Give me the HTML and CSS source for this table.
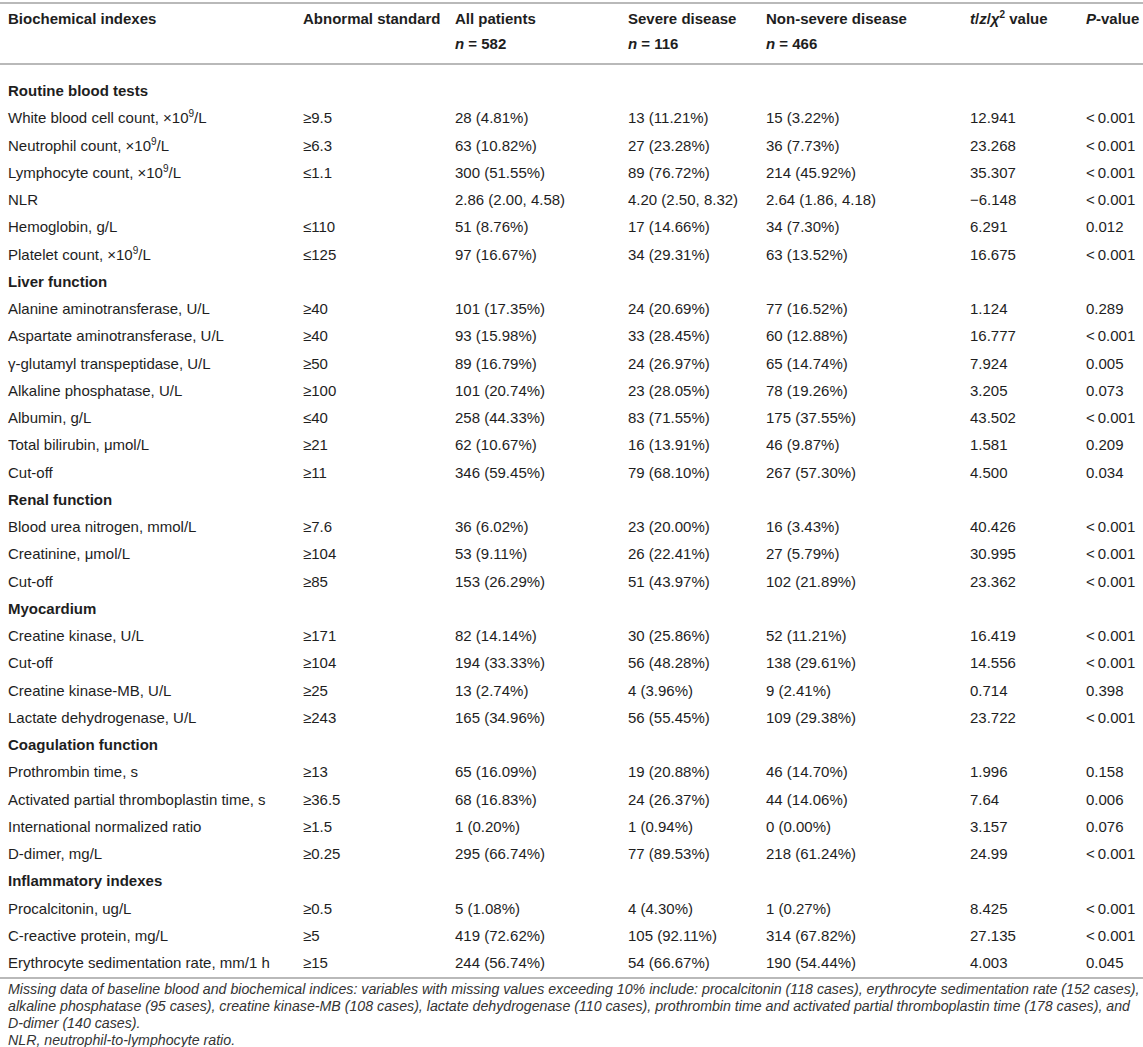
FILE: index.html
```html
<!DOCTYPE html>
<html>
<head>
<meta charset="utf-8">
<link rel="stylesheet" href="styles.css">
</head>
<body>
<div class="wrap">
<table class="tbl">
<colgroup>
<col class="c1"><col class="c2"><col class="c3"><col class="c4"><col class="c5"><col class="c6"><col class="c7">
</colgroup>
<thead>
<tr class="hrow">
<th>Biochemical indexes</th>
<th>Abnormal standard</th>
<th>All patients</th>
<th>Severe disease</th>
<th>Non-severe disease</th>
<th><i>t</i>/<i>z</i>/<i>χ</i><sup>2</sup> value</th>
<th><i>P</i>-value</th>
</tr>
<tr class="nrow">
<th></th>
<th></th>
<th><i>n</i> = 582</th>
<th><i>n</i> = 116</th>
<th><i>n</i> = 466</th>
<th></th>
<th></th>
</tr>
</thead>
<tbody>
<tr class="sec first"><td colspan="7">Routine blood tests</td></tr>
<tr><td>White blood cell count, ×10<sup>9</sup>/L</td><td>≥9.5</td><td>28 (4.81%)</td><td>13 (11.21%)</td><td>15 (3.22%)</td><td>12.941</td><td>&lt;&#8201;0.001</td></tr>
<tr><td>Neutrophil count, ×10<sup>9</sup>/L</td><td>≥6.3</td><td>63 (10.82%)</td><td>27 (23.28%)</td><td>36 (7.73%)</td><td>23.268</td><td>&lt;&#8201;0.001</td></tr>
<tr><td>Lymphocyte count, ×10<sup>9</sup>/L</td><td>≤1.1</td><td>300 (51.55%)</td><td>89 (76.72%)</td><td>214 (45.92%)</td><td>35.307</td><td>&lt;&#8201;0.001</td></tr>
<tr><td>NLR</td><td></td><td>2.86 (2.00, 4.58)</td><td>4.20 (2.50, 8.32)</td><td>2.64 (1.86, 4.18)</td><td>−6.148</td><td>&lt;&#8201;0.001</td></tr>
<tr><td>Hemoglobin, g/L</td><td>≤110</td><td>51 (8.76%)</td><td>17 (14.66%)</td><td>34 (7.30%)</td><td>6.291</td><td>0.012</td></tr>
<tr><td>Platelet count, ×10<sup>9</sup>/L</td><td>≤125</td><td>97 (16.67%)</td><td>34 (29.31%)</td><td>63 (13.52%)</td><td>16.675</td><td>&lt;&#8201;0.001</td></tr>
<tr class="sec"><td colspan="7">Liver function</td></tr>
<tr><td>Alanine aminotransferase, U/L</td><td>≥40</td><td>101 (17.35%)</td><td>24 (20.69%)</td><td>77 (16.52%)</td><td>1.124</td><td>0.289</td></tr>
<tr><td>Aspartate aminotransferase, U/L</td><td>≥40</td><td>93 (15.98%)</td><td>33 (28.45%)</td><td>60 (12.88%)</td><td>16.777</td><td>&lt;&#8201;0.001</td></tr>
<tr><td>γ-glutamyl transpeptidase, U/L</td><td>≥50</td><td>89 (16.79%)</td><td>24 (26.97%)</td><td>65 (14.74%)</td><td>7.924</td><td>0.005</td></tr>
<tr><td>Alkaline phosphatase, U/L</td><td>≥100</td><td>101 (20.74%)</td><td>23 (28.05%)</td><td>78 (19.26%)</td><td>3.205</td><td>0.073</td></tr>
<tr><td>Albumin, g/L</td><td>≤40</td><td>258 (44.33%)</td><td>83 (71.55%)</td><td>175 (37.55%)</td><td>43.502</td><td>&lt;&#8201;0.001</td></tr>
<tr><td>Total bilirubin, μmol/L</td><td>≥21</td><td>62 (10.67%)</td><td>16 (13.91%)</td><td>46 (9.87%)</td><td>1.581</td><td>0.209</td></tr>
<tr><td>Cut-off</td><td>≥11</td><td>346 (59.45%)</td><td>79 (68.10%)</td><td>267 (57.30%)</td><td>4.500</td><td>0.034</td></tr>
<tr class="sec"><td colspan="7">Renal function</td></tr>
<tr><td>Blood urea nitrogen, mmol/L</td><td>≥7.6</td><td>36 (6.02%)</td><td>23 (20.00%)</td><td>16 (3.43%)</td><td>40.426</td><td>&lt;&#8201;0.001</td></tr>
<tr><td>Creatinine, μmol/L</td><td>≥104</td><td>53 (9.11%)</td><td>26 (22.41%)</td><td>27 (5.79%)</td><td>30.995</td><td>&lt;&#8201;0.001</td></tr>
<tr><td>Cut-off</td><td>≥85</td><td>153 (26.29%)</td><td>51 (43.97%)</td><td>102 (21.89%)</td><td>23.362</td><td>&lt;&#8201;0.001</td></tr>
<tr class="sec"><td colspan="7">Myocardium</td></tr>
<tr><td>Creatine kinase, U/L</td><td>≥171</td><td>82 (14.14%)</td><td>30 (25.86%)</td><td>52 (11.21%)</td><td>16.419</td><td>&lt;&#8201;0.001</td></tr>
<tr><td>Cut-off</td><td>≥104</td><td>194 (33.33%)</td><td>56 (48.28%)</td><td>138 (29.61%)</td><td>14.556</td><td>&lt;&#8201;0.001</td></tr>
<tr><td>Creatine kinase-MB, U/L</td><td>≥25</td><td>13 (2.74%)</td><td>4 (3.96%)</td><td>9 (2.41%)</td><td>0.714</td><td>0.398</td></tr>
<tr><td>Lactate dehydrogenase, U/L</td><td>≥243</td><td>165 (34.96%)</td><td>56 (55.45%)</td><td>109 (29.38%)</td><td>23.722</td><td>&lt;&#8201;0.001</td></tr>
<tr class="sec"><td colspan="7">Coagulation function</td></tr>
<tr><td>Prothrombin time, s</td><td>≥13</td><td>65 (16.09%)</td><td>19 (20.88%)</td><td>46 (14.70%)</td><td>1.996</td><td>0.158</td></tr>
<tr><td>Activated partial thromboplastin time, s</td><td>≥36.5</td><td>68 (16.83%)</td><td>24 (26.37%)</td><td>44 (14.06%)</td><td>7.64</td><td>0.006</td></tr>
<tr><td>International normalized ratio</td><td>≥1.5</td><td>1 (0.20%)</td><td>1 (0.94%)</td><td>0 (0.00%)</td><td>3.157</td><td>0.076</td></tr>
<tr><td>D-dimer, mg/L</td><td>≥0.25</td><td>295 (66.74%)</td><td>77 (89.53%)</td><td>218 (61.24%)</td><td>24.99</td><td>&lt;&#8201;0.001</td></tr>
<tr class="sec"><td colspan="7">Inflammatory indexes</td></tr>
<tr><td>Procalcitonin, ug/L</td><td>≥0.5</td><td>5 (1.08%)</td><td>4 (4.30%)</td><td>1 (0.27%)</td><td>8.425</td><td>&lt;&#8201;0.001</td></tr>
<tr><td>C-reactive protein, mg/L</td><td>≥5</td><td>419 (72.62%)</td><td>105 (92.11%)</td><td>314 (67.82%)</td><td>27.135</td><td>&lt;&#8201;0.001</td></tr>
<tr class="last"><td>Erythrocyte sedimentation rate, mm/1 h</td><td>≥15</td><td>244 (56.74%)</td><td>54 (66.67%)</td><td>190 (54.44%)</td><td>4.003</td><td>0.045</td></tr>
</tbody>
</table>
<div class="notes">
<p>Missing data of baseline blood and biochemical indices: variables with missing values exceeding 10% include: procalcitonin (118 cases), erythrocyte sedimentation rate (152 cases),<br>alkaline phosphatase (95 cases), creatine kinase-MB (108 cases), lactate dehydrogenase (110 cases), prothrombin time and activated partial thromboplastin time (178 cases), and<br>D-dimer (140 cases).</p>
<p>NLR, neutrophil-to-lymphocyte ratio.</p>
</div>
</div>
</body>
</html>
```

FILE: styles.css
```css
html, body {
  margin: 0;
  padding: 0;
  background: #ffffff;
}
body {
  font-family: "Liberation Sans", Arial, sans-serif;
  font-size: 15px;
  color: #1e1e1e;
}
.wrap {
  padding-top: 2px;
}
.tbl {
  width: 1143px;
  border-collapse: collapse;
  table-layout: fixed;
}
.c1 { width: 295px; }
.c2 { width: 152px; }
.c3 { width: 173px; }
.c4 { width: 138px; }
.c5 { width: 204px; }
.c6 { width: 116px; }
.c7 { width: 65px; }
.tbl th, .tbl td {
  text-align: left;
  vertical-align: middle;
  padding: 0 0 0 8px;
  white-space: nowrap;
}
.tbl th {
  font-weight: bold;
  line-height: 20px;
}
.tbl td {
  line-height: 27.25px;
}
.tbl tr.hrow th {
  border-top: 2px solid #b9b9b9;
  padding-top: 5px;
  padding-bottom: 5px;
}
.tbl tr.nrow th {
  padding-top: 0;
  padding-bottom: 9px;
  border-bottom: 2px solid #b9b9b9;
}
.tbl sup {
  font-size: 10px;
  line-height: 0;
  vertical-align: 6px;
}
.tbl tr.first td {
  padding-top: 12px;
}
.tbl tr.sec td {
  font-weight: bold;
}
.tbl tr.last td {
  padding-bottom: 1px;
  border-bottom: 2px solid #b9b9b9;
}
.notes {
  padding: 2px 0 0 8px;
  font-size: 14.2px;
  font-style: italic;
  line-height: 17px;
  color: #333333;
}
.notes p {
  margin: 0;
  white-space: nowrap;
}
```
